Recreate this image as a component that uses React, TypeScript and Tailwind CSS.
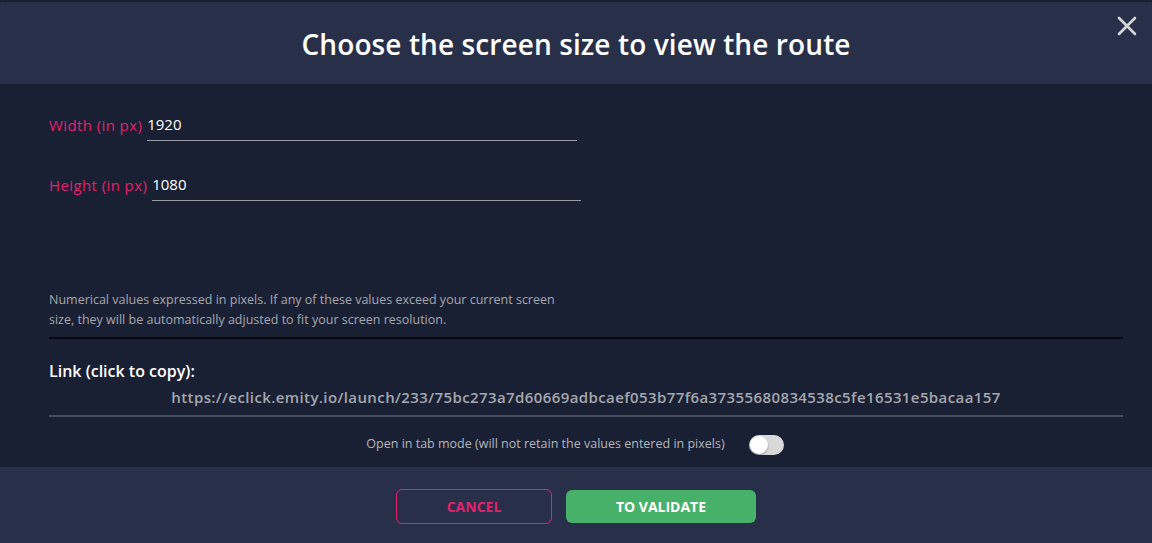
import React, { useState } from 'react';

const font = { fontFamily: '"Open Sans", Lato, sans-serif' };

const Field: React.FC<{ label: string; value: string; lineWidth: string }> = ({ label, value, lineWidth }) => (
  <div className="flex items-end h-[37px]">
    <span className="text-[15px] text-[#e3216e] pb-[8px] mr-[5px] leading-none tracking-[0.4px]">{label}</span>
    <div className={`${lineWidth} border-b border-[#9a9ca4] pb-[8px] text-[15px] text-white leading-none`}>{value}</div>
  </div>
);

export default function App() {
  const [tabMode, setTabMode] = useState(false);

  return (
    <div className="w-[1152px] h-[543px] flex flex-col bg-[#1a2033] overflow-hidden" style={font}>
      {/* Header */}
      <div className="h-[2px] bg-[#1a1f30]" />
      <div className="relative h-[82px] bg-[#283049] flex items-center justify-center rounded-t-[3px]">
        <h1 className="text-[28px] font-semibold text-white tracking-[0.1px] mt-[2px]">Choose the screen size to view the route</h1>
        <button className="absolute right-[13px] top-[12px] text-[#d5d7dc]">
          <svg width="24" height="24" viewBox="0 0 24 24" fill="none" stroke="currentColor" strokeWidth="2.6" strokeLinecap="round">
            <path d="M4 4L20 20M20 4L4 20" />
          </svg>
        </button>
      </div>

      {/* Body */}
      <div className="flex-1 pl-[49px] pr-[29px] pt-[20px]">
        <Field label="Width (in px)" value="1920" lineWidth="w-[430px]" />
        <div className="h-[23px]" />
        <Field label="Height (in px)" value="1080" lineWidth="w-[429px]" />

        <p className="mt-[89px] w-[520px] text-[12.5px] leading-[20px] text-[#a5a7ae]">
          Numerical values expressed in pixels. If any of these values exceed your current screen size, they will be automatically adjusted to fit your screen resolution.
        </p>
        <div className="mt-[7px] h-[2px] bg-[#05070c]" />

        <div className="mt-[20px] text-[16px] font-semibold text-white">Link (click to copy):</div>
        <div className="mt-[3px] pb-[6px] border-b-2 border-[#474c5c] text-center text-[15px] font-semibold text-[#a5a7ae] cursor-pointer tracking-[0.4px]">
          https://eclick.emity.io/launch/233/75bc273a7d60669adbcaef053b77f6a37355680834538c5fe16531e5bacaa157
        </div>

        <div className="mt-[18px] flex items-center justify-center gap-[24px] pr-[22px]">
          <span className="text-[12.5px] text-[#b4b6bc]">Open in tab mode (will not retain the values entered in pixels)</span>
          <button
            onClick={() => setTabMode(!tabMode)}
            className="w-[35px] h-[20px] rounded-full bg-[#d9d9d9] flex items-center px-[1px]"
          >
            <span className="w-[18px] h-[18px] rounded-full bg-white shadow-[0_1px_2px_rgba(0,0,0,0.35)]" />
          </button>
        </div>
      </div>

      {/* Footer */}
      <div className="h-[76px] bg-[#283049] flex items-center justify-center gap-[14px] pt-[3px]">
        <button className="w-[156px] h-[35px] rounded-[6px] border border-[#e3216e] text-[#e3216e] text-[14px] font-bold">
          CANCEL
        </button>
        <button className="w-[190px] h-[33px] rounded-[6px] bg-[#47b169] text-white text-[14px] font-bold">
          TO VALIDATE
        </button>
      </div>
    </div>
  );
}
